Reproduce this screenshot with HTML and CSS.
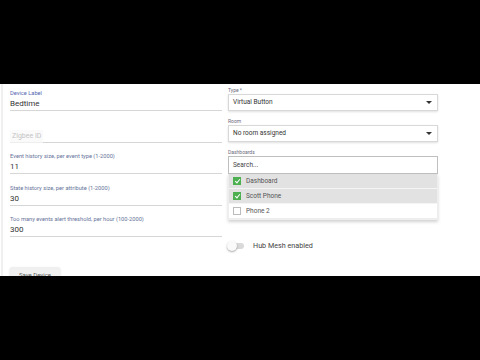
FILE: index.html
```html
<!DOCTYPE html>
<html lang="en">
<head>
    <meta charset="UTF-8">
    <meta name="viewport" content="width=device-width, initial-scale=1.0">
    <title>Device Edit</title>
    <link rel="stylesheet" href="styles.css">
</head>
<body>

    <div class="frame">
        <div class="card">
            <div class="col-left">
                <div class="field">
                    <label class="accent">Device Label</label>
                    <div class="input">Bedtime</div>
                </div>
                <div class="field">
                    <label></label>
                    <div class="input placeholder"><span class="disabled-box">Zigbee ID</span></div>
                </div>
                <div class="field">
                    <label>Event history size, per event type (1-2000)</label>
                    <div class="input">11</div>
                </div>
                <div class="field">
                    <label>State history size, per attribute (1-2000)</label>
                    <div class="input">30</div>
                </div>
                <div class="field">
                    <label>Too many events alert threshold, per hour (100-2000)</label>
                    <div class="input">300</div>
                </div>
                <button class="save-btn">Save Device</button>
            </div>

            <div class="col-right">
                <div class="sfield">
                    <label>Type *</label>
                    <div class="select">Virtual Button <span class="caret"></span></div>
                </div>
                <div class="sfield">
                    <label>Room</label>
                    <div class="select">No room assigned <span class="caret"></span></div>
                </div>
                <div class="sfield">
                    <label>Dashboards</label>
                    <div class="search">Search...</div>
                    <ul class="options">
                        <li class="checked"><span class="box"></span>Dashboard</li>
                        <li class="checked"><span class="box"></span>Scott Phone</li>
                        <li><span class="box"></span>Phone 2</li>
                    </ul>
                </div>
                <div class="toggle-row">
                    <span class="toggle"><span class="knob"></span></span>
                    Hub Mesh enabled
                </div>
            </div>
        </div>
    </div>

</body>
</html>
```

FILE: styles.css
```css
html, body {
    margin: 0;
    padding: 0;
    background: #000;
}
body {
    font-family: Roboto, "Liberation Sans", sans-serif;
    width: 480px;
    height: 360px;
    overflow: hidden;
}
.frame {
    margin-top: 84px;
    height: 192px;
    background: #fff;
    overflow: hidden;
}
.card {
    display: grid;
    grid-template-columns: 212px 210px;
    column-gap: 6px;
    padding: 2px 0 0 7px;
    border-left: 2px solid #f0f0f0;
    margin-left: 1px;
    height: 100%;
    box-sizing: border-box;
}
.col-left {
    padding-top: 3px;
}
.field {
    margin-bottom: 9.5px;
}
.field label {
    display: block;
    font-size: 5.7px;
    line-height: 8px;
    height: 8px;
    color: #66739a;
}
.field label.accent {
    color: #5567b0;
}
.input {
    font-size: 8px;
    line-height: 13px;
    height: 13px;
    color: #333;
    border-bottom: 1px solid #d6d6d6;
}
.input.placeholder {
    color: #c4c4c4;
}
.disabled-box {
    display: inline-block;
    line-height: 12px;
    padding: 0 2px;
    background: #fafafa;
    border-bottom: 1px solid #eee;
    font-size: 7px;
}
.save-btn {
    margin-top: 20px;
    width: 50px;
    height: 16px;
    padding: 0;
    font-family: inherit;
    font-size: 6px;
    color: #555;
    background: #f0f0f0;
    border: none;
    border-radius: 2px;
    box-shadow: 0 1px 2px rgba(0, 0, 0, 0.22);
}
.sfield {
    margin-bottom: 6px;
}
.sfield label {
    display: block;
    font-size: 5px;
    line-height: 8px;
    color: #6a6a7a;
}
.select {
    position: relative;
    height: 15px;
    line-height: 15px;
    padding-left: 4px;
    font-size: 6.5px;
    color: #333;
    border: 1px solid #d8d8d8;
    box-shadow: 0 1px 2px rgba(0, 0, 0, 0.12);
}
.caret {
    position: absolute;
    right: 5px;
    top: 6px;
    border-left: 3px solid transparent;
    border-right: 3px solid transparent;
    border-top: 3px solid #333;
}
.search {
    height: 16px;
    line-height: 16px;
    padding-left: 4px;
    font-size: 6.5px;
    color: #444;
    border: 1px solid #bfbfbf;
}
.options {
    list-style: none;
    margin: 0;
    padding: 0;
    border: 1px solid #eee;
    border-top: none;
    box-shadow: 0 2px 3px rgba(0, 0, 0, 0.18);
}
.options li {
    display: flex;
    align-items: center;
    gap: 5px;
    height: 14px;
    padding-left: 4px;
    font-size: 6.5px;
    color: #555;
    border-bottom: 1px solid #eee;
}
.options li.checked {
    background: #e2e2e2;
    border-bottom-color: #f5f5f5;
}
.box {
    width: 6px;
    height: 6px;
    border: 1px solid #bbb;
    background: #fff;
    position: relative;
}
.checked .box {
    background: #4caf50;
    border-color: #4caf50;
}
.checked .box::after {
    content: "";
    position: absolute;
    left: 1.5px;
    top: 0;
    width: 2px;
    height: 4px;
    border-right: 1px solid #fff;
    border-bottom: 1px solid #fff;
    transform: rotate(40deg);
}
.toggle-row {
    display: flex;
    align-items: center;
    gap: 9px;
    margin-top: 21px;
    font-size: 7.2px;
    color: #444;
}
.toggle {
    position: relative;
    width: 16px;
    height: 6px;
    border-radius: 3px;
    background: #d9d9d9;
}
.knob {
    position: absolute;
    left: -1px;
    top: -2px;
    width: 10px;
    height: 10px;
    border-radius: 50%;
    background: #fafafa;
    box-shadow: 0 1px 2px rgba(0, 0, 0, 0.35);
}
```
